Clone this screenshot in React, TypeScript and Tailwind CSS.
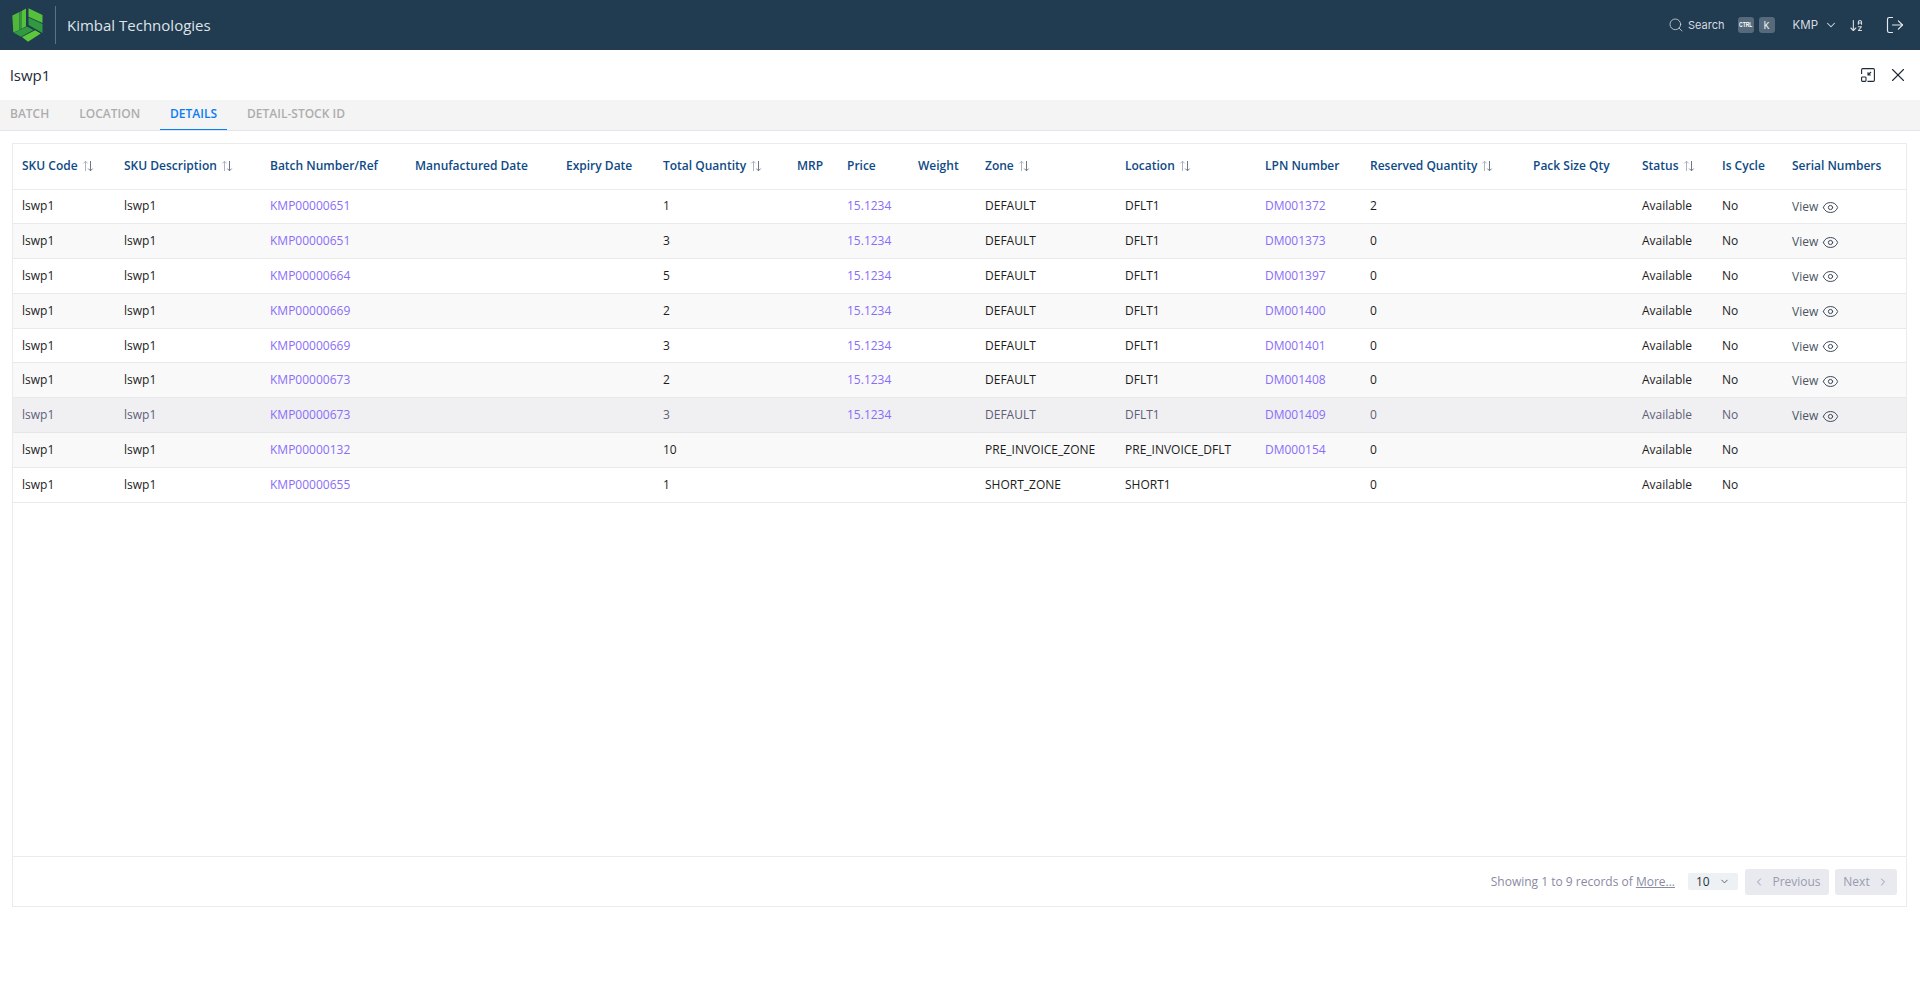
import React from "react";
import {
  ArrowDownAZ,
  ChevronDown,
  ChevronLeft,
  ChevronRight,
  Eye,
  LogOut,
  Search,
  X,
} from "lucide-react";

const columns = [
  { label: "SKU Code", sort: true, width: "w-[102px]" },
  { label: "SKU Description", sort: true, width: "w-[146px]" },
  { label: "Batch Number/Ref", width: "w-[145px]" },
  { label: "Manufactured Date", width: "w-[151px]" },
  { label: "Expiry Date", width: "w-[97px]" },
  { label: "Total Quantity", sort: true, width: "w-[134px]" },
  { label: "MRP", width: "w-[50px]" },
  { label: "Price", width: "w-[71px]" },
  { label: "Weight", width: "w-[67px]" },
  { label: "Zone", sort: true, width: "w-[140px]" },
  { label: "Location", sort: true, width: "w-[140px]" },
  { label: "LPN Number", width: "w-[105px]" },
  { label: "Reserved Quantity", sort: true, width: "w-[163px]" },
  { label: "Pack Size Qty", width: "w-[109px]" },
  { label: "Status", sort: true, width: "w-[80px]" },
  { label: "Is Cycle", width: "w-[70px]" },
  { label: "Serial Numbers", width: "" },
];

const rows = [
  { batch: "KMP00000651", qty: "1", price: "15.1234", zone: "DEFAULT", location: "DFLT1", lpn: "DM001372", reserved: "2", view: true },
  { batch: "KMP00000651", qty: "3", price: "15.1234", zone: "DEFAULT", location: "DFLT1", lpn: "DM001373", reserved: "0", view: true },
  { batch: "KMP00000664", qty: "5", price: "15.1234", zone: "DEFAULT", location: "DFLT1", lpn: "DM001397", reserved: "0", view: true },
  { batch: "KMP00000669", qty: "2", price: "15.1234", zone: "DEFAULT", location: "DFLT1", lpn: "DM001400", reserved: "0", view: true },
  { batch: "KMP00000669", qty: "3", price: "15.1234", zone: "DEFAULT", location: "DFLT1", lpn: "DM001401", reserved: "0", view: true },
  { batch: "KMP00000673", qty: "2", price: "15.1234", zone: "DEFAULT", location: "DFLT1", lpn: "DM001408", reserved: "0", view: true },
  { batch: "KMP00000673", qty: "3", price: "15.1234", zone: "DEFAULT", location: "DFLT1", lpn: "DM001409", reserved: "0", view: true },
  { batch: "KMP00000132", qty: "10", price: "", zone: "PRE_INVOICE_ZONE", location: "PRE_INVOICE_DFLT", lpn: "DM000154", reserved: "0", view: false },
  { batch: "KMP00000655", qty: "1", price: "", zone: "SHORT_ZONE", location: "SHORT1", lpn: "", reserved: "0", view: false },
];

const tabs = ["BATCH", "LOCATION", "DETAILS", "DETAIL-STOCK ID"];

function Logo() {
  return (
    <svg viewBox="12 8 31 34" className="h-[34px] w-[31px]">
      <polygon points="12.3,15.5 19.5,12 19.5,30 13.3,32.5" fill="#4fb83a" />
      <polygon points="19.5,12 22,10.8 22,28.5 19.5,30" fill="#35953a" />
      <polygon points="22,10.8 26,8.5 26,26.5 22,28.5" fill="#55c03c" />
      <polygon points="28.5,8.3 42.5,15 42.5,23 28.5,16.8" fill="#55c03c" />
      <polygon points="28.5,17.5 42.5,24 42.5,33 28.5,25" fill="#2f9a3f" />
      <polygon points="13.8,32.8 27,26.5 33.5,30 21,36.7" fill="#2f9a3f" />
      <polygon points="22,37 35,30.3 40.7,33.5 28,41.7" fill="#5cc93b" />
    </svg>
  );
}

function SortIcon() {
  return (
    <svg viewBox="0 0 12 12" className="ml-[4px] inline-block h-[12px] w-[12px] align-[-1.5px]" fill="none" strokeWidth="1">
      <path d="M3.5 11V1.2M1.3 3.4l2.2-2.2 2.2 2.2" stroke="#a9b3c4" />
      <path d="M8.5 1v9.8M6.3 8.6l2.2 2.2 2.2-2.2" stroke="#6b7688" />
    </svg>
  );
}

function CompressIcon() {
  return (
    <svg viewBox="0 0 14 14" className="h-[14px] w-[14px]" fill="none" stroke="#1f2937" strokeWidth="1.1">
      <path d="M0.6 6V1.8A1.2 1.2 0 0 1 1.8 0.6H12.2A1.2 1.2 0 0 1 13.4 1.8V12.2A1.2 1.2 0 0 1 12.2 13.4H6.5" />
      <rect x="0.6" y="9" width="4.4" height="4.4" rx="0.8" />
      <path d="M10 4L7 7M7 4.2V7H9.8" />
    </svg>
  );
}

export default function App() {
  return (
    <div className="flex h-[992px] flex-col bg-white font-['Open_Sans',sans-serif] text-[12px] text-[#1c1c1c]">
      <header className="flex h-[50px] shrink-0 items-center bg-[#213b50] text-[#d5dbe1]">
        <div className="ml-[12px] flex w-[31px] items-center">
          <Logo />
        </div>
        <div className="ml-[12px] h-[38px] w-px bg-[#5d7384]" />
        <span className="ml-[11px] text-[15px] text-[#dfe4e8]">Kimbal Technologies</span>
        <div className="ml-auto flex items-center font-['Inter',sans-serif]">
          <Search size={16} strokeWidth={1.2} />
          <span className="ml-[4px] text-[11px]">Search</span>
          <kbd className="ml-[13px] flex h-[16px] w-[16px] items-center justify-center overflow-hidden rounded-[3px] bg-[#566a7b] font-['Liberation_Sans',sans-serif] text-[8px] font-bold text-white">
            <span className="scale-x-[0.62]">CTRL</span>
          </kbd>
          <kbd className="ml-[5px] flex h-[16px] w-[16px] items-center justify-center rounded-[3px] bg-[#566a7b] font-['Inter',sans-serif] text-[11px] text-[#e4e8eb]">
            k
          </kbd>
          <span className="ml-[18px] mt-[1px] text-[11.5px]">KMP</span>
          <ChevronDown size={14} strokeWidth={1.8} className="ml-[6px]" />
          <ArrowDownAZ size={15} strokeWidth={1.8} className="ml-[11px]" />
          <LogOut size={20} strokeWidth={1.4} className="ml-[21px] mr-[15px] text-[#e6eaee]" />
        </div>
      </header>

      <div className="flex h-[50px] shrink-0 items-center justify-between">
        <h1 className="ml-[10px] text-[15px] font-medium text-[#1e2a36]">lswp1</h1>
        <div className="mr-[11px] flex items-center gap-[12px]">
          <CompressIcon />
          <X size={22} strokeWidth={1.2} className="text-[#1f2937]" />
        </div>
      </div>

      <nav className="flex h-[31px] shrink-0 items-stretch gap-[10px] border-b border-[#dfe6ec] bg-[#f4f4f4]">
        {tabs.map((tab) => (
          <div
            key={tab}
            className={
              tab === "DETAILS"
                ? "flex items-center border-b border-[#0a7cf5] px-[10px] pb-[1px] font-semibold text-[#0a7cf5]"
                : "flex items-center px-[10px] pb-[2px] font-semibold text-[#adadad]"
            }
          >
            {tab}
          </div>
        ))}
      </nav>

      <section className="ml-[12px] mt-[12px] flex h-[764px] w-[1895px] flex-col border border-[#ebebeb]">
        <div className="flex-1">
          <table className="w-full table-fixed border-collapse">
            <colgroup>
              {columns.map((col) => (
                <col key={col.label} className={col.width} />
              ))}
            </colgroup>
            <thead>
              <tr className="h-[45px] border-b border-[#ebebeb]">
                {columns.map((col) => (
                  <th
                    key={col.label}
                    className="whitespace-nowrap pl-[9px] text-left text-[12px] font-semibold text-[#0e4a86]"
                  >
                    {col.label}
                    {col.sort && <SortIcon />}
                  </th>
                ))}
              </tr>
            </thead>
            <tbody>
              {rows.map((row, i) => {
                const muted = i === 6;
                const rowClass = muted
                  ? "h-[34.8px] border-b border-[#e6e6e6] bg-[#f0f0f3] text-[#5e5e78]"
                  : i % 2 === 1
                    ? "h-[34.8px] border-b border-[#e9e9e9] bg-[#f9f9f9]"
                    : "h-[34.8px] border-b border-[#e9e9e9] bg-white";
                const cell = "whitespace-nowrap pl-[9px]";
                const link = "whitespace-nowrap pl-[9px] text-[#8a6df7]";
                return (
                  <tr key={i} className={rowClass}>
                    <td className={cell}>lswp1</td>
                    <td className={cell}>lswp1</td>
                    <td className={link}>{row.batch}</td>
                    <td className={cell} />
                    <td className={cell} />
                    <td className={cell}>{row.qty}</td>
                    <td className={cell} />
                    <td className={link}>{row.price}</td>
                    <td className={cell} />
                    <td className={cell}>{row.zone}</td>
                    <td className={cell}>{row.location}</td>
                    <td className={link}>{row.lpn}</td>
                    <td className={cell}>{row.reserved}</td>
                    <td className={cell} />
                    <td className={cell}>Available</td>
                    <td className={cell}>No</td>
                    <td className={cell}>
                      {row.view && (
                        <span className="flex translate-y-px items-center gap-[4px] text-[#4a5563]">
                          View
                          <Eye size={17} strokeWidth={1.4} className="text-[#3b4656]" />
                        </span>
                      )}
                    </td>
                  </tr>
                );
              })}
            </tbody>
          </table>
        </div>

        <footer className="flex h-[50px] shrink-0 items-center justify-end border-t border-[#ebebeb] pr-[9px]">
          <span className="text-[#8a8aa3]">
            Showing 1 to 9 records of <span className="underline">More...</span>
          </span>
          <div className="ml-[13px] flex h-[17px] w-[50px] items-center justify-between rounded-[2px] bg-[#eef1f4] pl-[8px] pr-[8px] text-[#2a2f3a]">
            10
            <ChevronDown size={11} strokeWidth={2} className="text-[#4a5563]" />
          </div>
          <button className="ml-[7px] flex h-[26px] w-[84px] items-center justify-center gap-[7px] rounded-[3px] bg-[#e9eaef] text-[#9a9bb0]">
            <ChevronLeft size={12} strokeWidth={2} />
            Previous
          </button>
          <button className="ml-[6px] flex h-[26px] w-[62px] items-center justify-center gap-[7px] rounded-[3px] bg-[#e9eaef] text-[#9a9bb0]">
            Next
            <ChevronRight size={12} strokeWidth={2} />
          </button>
        </footer>
      </section>
    </div>
  );
}
